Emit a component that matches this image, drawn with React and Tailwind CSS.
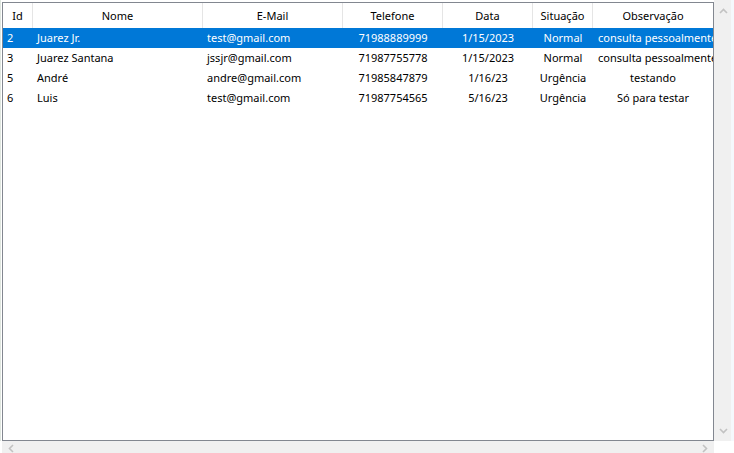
import React from 'react';

const rows = [
  { id: 2, nome: 'Juarez Jr.', email: 'test@gmail.com', tel: '71988889999', data: '1/15/2023', sit: 'Normal', obs: 'consulta pessoalmente' },
  { id: 3, nome: 'Juarez Santana', email: 'jssjr@gmail.com', tel: '71987755778', data: '1/15/2023', sit: 'Normal', obs: 'consulta pessoalmente' },
  { id: 5, nome: 'André', email: 'andre@gmail.com', tel: '71985847879', data: '1/16/23', sit: 'Urgência', obs: 'testando' },
  { id: 6, nome: 'Luis', email: 'test@gmail.com', tel: '71987754565', data: '5/16/23', sit: 'Urgência', obs: 'Só para testar' },
];

const cols = 'grid grid-cols-[30px_170px_140px_100px_90px_60px_120px]';

const Chevron = ({ d }) => (
  <svg width="9" height="9" viewBox="0 0 9 9" fill="none" stroke="#c2c2c2" strokeWidth="1.6">
    <path d={d} />
  </svg>
);

export default function App() {
  const head = ['Id', 'Nome', 'E-Mail', 'Telefone', 'Data', 'Situação', 'Observação'];

  return (
    <div className="w-[734px] h-[453px] overflow-hidden bg-white flex flex-col text-[11px] leading-[15px] text-black" style={{ fontFamily: '"Noto Sans", "Open Sans", sans-serif' }}>
      <div className="flex h-[441px]">
        <div className="w-[2px] border-l border-[#dfe6df]" />
        <div className="flex flex-col w-[712px]">
          <div className="h-[2px]" />
          <div className="flex-1 border border-[#828790] overflow-hidden">
            <div className={`${cols} h-[25px] bg-white`}>
              {head.map((h, i) => (
                <div key={h} className={`flex items-center justify-center pb-[1px] ${i < 6 ? 'border-r border-[#e5e5e5]' : ''}`}>
                  {h}
                </div>
              ))}
            </div>
            {rows.map((r, idx) => {
              const sel = idx === 0;
              return (
                <div key={r.id} className={`${cols} h-[20px] pb-[2px] ${sel ? 'bg-[#0078d7] text-white' : ''}`}>
                  <div className="flex items-center pl-[4px]">{r.id}</div>
                  <div className="flex items-center pl-[4px]">{r.nome}</div>
                  <div className="flex items-center pl-[4px]">{r.email}</div>
                  <div className="flex items-center justify-center">{r.tel}</div>
                  <div className="flex items-center justify-center">{r.data}</div>
                  <div className="flex items-center justify-center">{r.sit}</div>
                  <div className="flex items-center overflow-hidden whitespace-nowrap">
                    <div className="w-full text-center px-[5px]">{r.obs}</div>
                  </div>
                </div>
              );
            })}
          </div>
        </div>
        <div className="w-[17px] bg-[#f0f0f0] flex flex-col items-center justify-between pt-[7px] pb-[6px] pl-[1px]">
          <Chevron d="M1 6 L4.5 2.5 L8 6" />
          <Chevron d="M1 3 L4.5 6.5 L8 3" />
        </div>
        <div className="w-[3px] bg-[#f5f8fc]" />
      </div>
      <div className="flex flex-1">
        <div className="w-[2px]" />
        <div className="w-[712px] bg-[#f0f0f0] flex items-center justify-between px-[5px] pt-[3px]">
          <Chevron d="M6 1 L2.5 4.5 L6 8" />
          <Chevron d="M3 1 L6.5 4.5 L3 8" />
        </div>
        <div className="flex-1 bg-white" />
      </div>
    </div>
  );
}
